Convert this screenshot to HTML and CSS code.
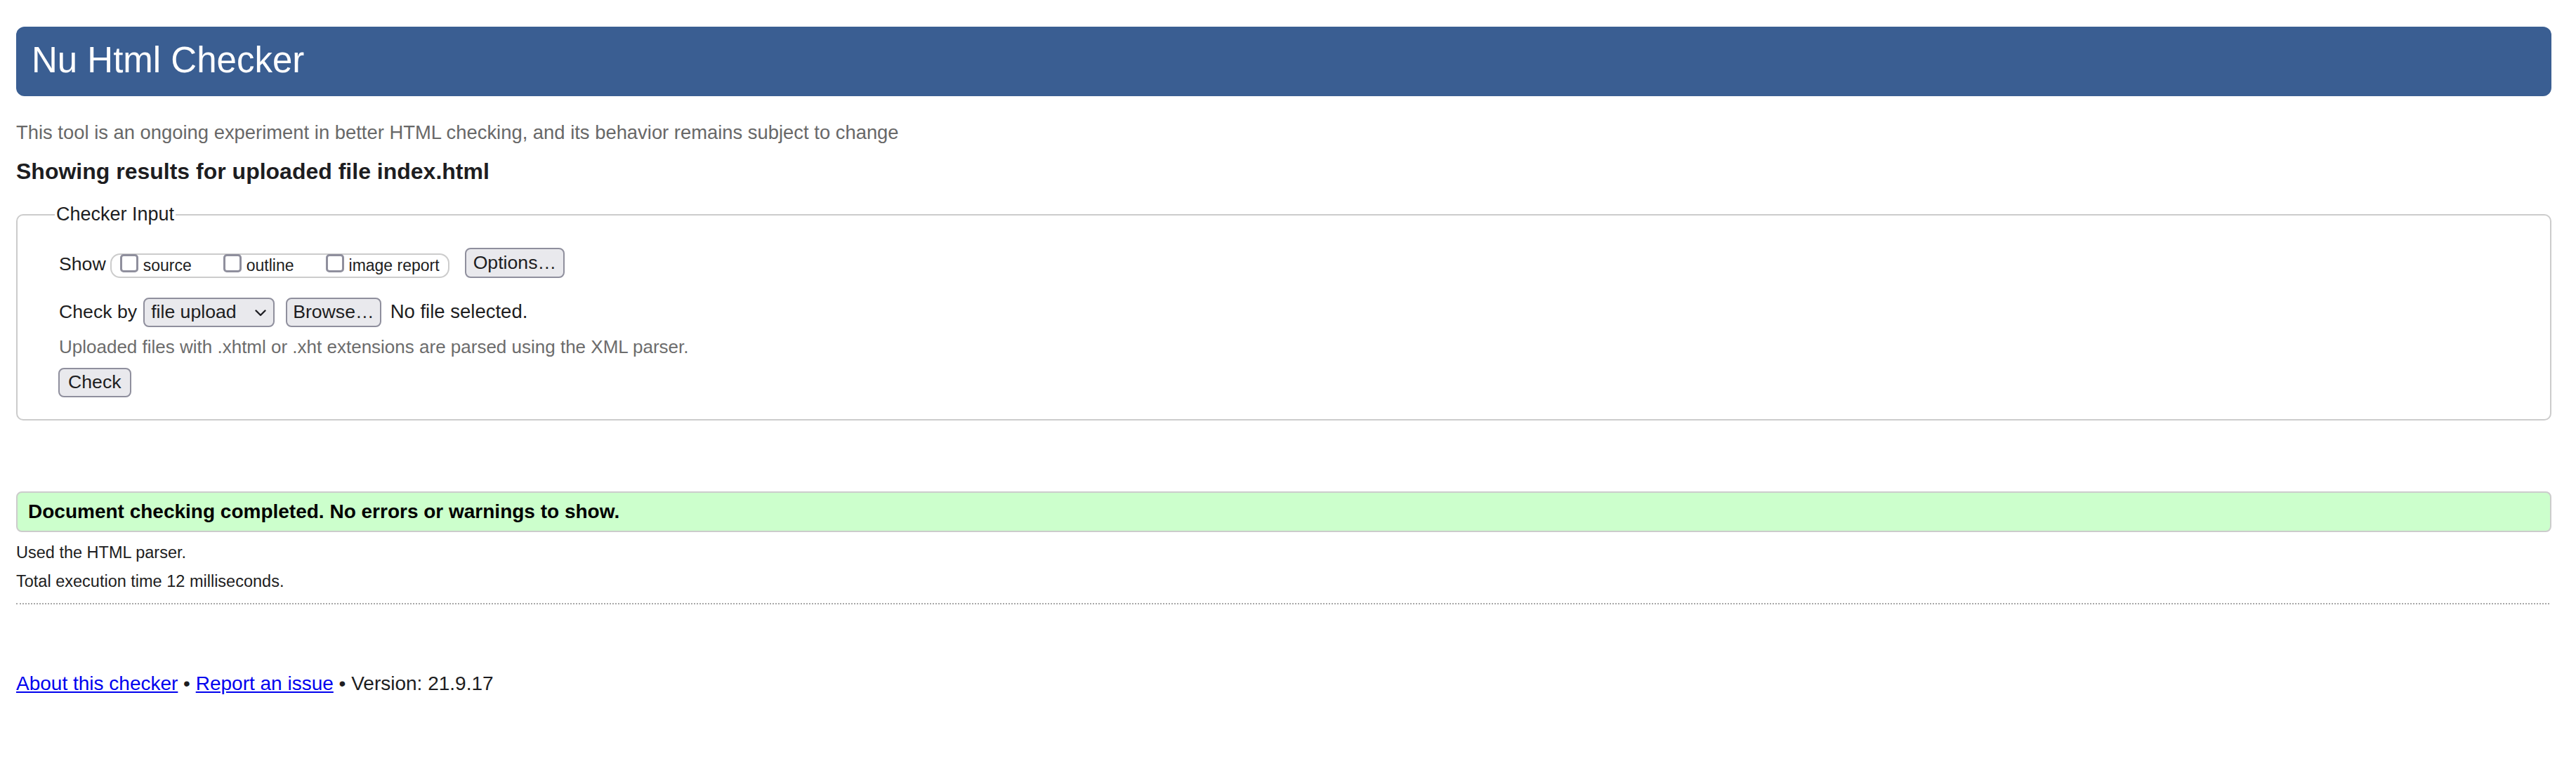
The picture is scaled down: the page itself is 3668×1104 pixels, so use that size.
FILE: index.html
```html
<!DOCTYPE html>
<html lang="en">
<head>
<meta charset="utf-8">
<title>Nu Html Checker</title>
<link rel="stylesheet" href="styles.css">
</head>
<body>
<h1 class="title">Nu Html Checker</h1>
<p class="tagline">This tool is an ongoing experiment in better HTML checking, and its behavior remains subject to change</p>
<h2 class="results-title">Showing results for uploaded file index.html</h2>
<form class="checker">
  <fieldset class="checker-input">
    <legend class="legend">Checker Input</legend>
    <div class="row show-row">
      <span class="label show-label">Show</span>
      <span class="options-group">
        <label class="opt"><input type="checkbox" class="cb"><span class="opt-text">source</span></label>
        <label class="opt"><input type="checkbox" class="cb"><span class="opt-text">outline</span></label>
        <label class="opt"><input type="checkbox" class="cb"><span class="opt-text">image report</span></label>
      </span>
      <button type="button" class="btn options-btn">Options…</button>
    </div>
    <div class="row checkby-row">
      <span class="label">Check by</span>
      <span class="select-wrap">
        <select class="select"><option>file upload</option></select>
        <svg class="chevron" width="16" height="10" viewBox="0 0 16 10" aria-hidden="true"><path d="M1.5 1.5 L8 8 L14.5 1.5" fill="none" stroke="#1f1f24" stroke-width="2.4" stroke-linecap="round" stroke-linejoin="round"/></svg>
      </span>
      <button type="button" class="btn browse-btn">Browse…</button>
      <span class="nofile">No file selected.</span>
    </div>
    <p class="note">Uploaded files with .xhtml or .xht extensions are parsed using the XML parser.</p>
    <button type="button" class="btn check-btn">Check</button>
  </fieldset>
</form>
<p class="success">Document checking completed. No errors or warnings to show.</p>
<p class="meta meta-first">Used the HTML parser.</p>
<p class="meta">Total execution time 12 milliseconds.</p>
<hr class="sep">
<p class="footer"><a class="link" href="#">About this checker</a> • <a class="link" href="#">Report an issue</a> • Version: 21.9.17</p>
</body>
</html>
```

FILE: styles.css
```css
html {
  background: #ffffff;
}

body {
  margin: 0;
  padding: 38px 35px 0 23px;
  font-family: "Liberation Sans", Arial, Helvetica, sans-serif;
  color: #222222;
  font-size: 28px;
}

.title {
  margin: 0;
  height: 99px;
  box-sizing: border-box;
  padding: 19px 22px 23px;
  background: #3a5e92;
  color: #ffffff;
  border-radius: 12px;
  font-size: 51px;
  line-height: 57px;
  font-weight: normal;
}

.tagline {
  margin: 36px 0 0;
  font-size: 27.4px;
  line-height: 32px;
  color: #686868;
}

.results-title {
  margin: 21px 0 0;
  font-size: 32px;
  line-height: 36px;
  font-weight: bold;
  color: #1d1d21;
}

.checker {
  margin: 0;
}

.checker-input {
  margin: 28px 0 0;
  padding: 32px 20px 31px 59px;
  border: 2px solid #cccccc;
  border-radius: 10px;
  min-inline-size: 0;
}

.legend {
  padding: 0 2px;
  margin-left: -6px;
  font-size: 27px;
  line-height: 31px;
  color: #1d1d21;
}

.row {
  display: flex;
}

.show-row {
  align-items: flex-end;
  height: 43px;
}

.label {
  font-size: 26.67px;
  line-height: 31px;
  color: #1d1d21;
}

.show-label {
  padding-bottom: 4px;
  margin-right: 6px;
}

.options-group {
  display: flex;
  align-items: center;
  gap: 45px;
  height: 35px;
  box-sizing: border-box;
  border: 2px solid #cccccc;
  border-radius: 14px;
  padding: 0 12px;
}

.opt {
  display: flex;
  align-items: center;
}

.cb {
  -webkit-appearance: none;
  appearance: none;
  width: 26px;
  height: 26px;
  box-sizing: border-box;
  margin: -7px 7px 0 0;
  border: 3px solid #8f8f9d;
  border-radius: 5px;
  background: #ffffff;
}

.opt-text {
  font-size: 23px;
  line-height: 27px;
  color: #1d1d21;
}

.btn {
  font-family: "Liberation Sans", Arial, Helvetica, sans-serif;
  font-size: 26.67px;
  line-height: 31px;
  color: #1d1d21;
  background: #e9e9ed;
  border: 2px solid #8f8f9d;
  border-radius: 8px;
  margin: 0;
}

.options-btn {
  margin-left: 22px;
  padding: 4px 10px;
  height: 43px;
}

.checkby-row {
  align-items: baseline;
  margin-top: 28px;
}

.checkby-row .label {
  margin-right: 9px;
}

.select-wrap {
  position: relative;
  display: inline-block;
}

.select {
  -webkit-appearance: none;
  appearance: none;
  width: 187px;
  height: 42px;
  box-sizing: border-box;
  padding: 3px 30px 4px 9px;
  font-family: "Liberation Sans", Arial, Helvetica, sans-serif;
  font-size: 26.67px;
  line-height: 31px;
  color: #1d1d21;
  background: #e9e9ed;
  border: 2px solid #8f8f9d;
  border-radius: 8px;
  margin: 0;
}

.chevron {
  position: absolute;
  right: 12px;
  top: 17px;
  pointer-events: none;
}

.browse-btn {
  margin-left: 16px;
  padding: 3px 8px 4px;
  height: 42px;
}

.nofile {
  margin-left: 13px;
  font-size: 27.5px;
  line-height: 31px;
  color: #1d1d21;
}

.note {
  margin: 13px 0 0;
  font-size: 26px;
  line-height: 30px;
  color: #6c6c6c;
}

.check-btn {
  display: block;
  margin-top: 15px;
  margin-left: -1px;
  padding: 3px 12px 4px;
  height: 42px;
}

.success {
  margin: 101px 0 0;
  padding: 11px 15px;
  background: #ccffcc;
  border: 2px solid #cccccc;
  border-radius: 8px;
  font-size: 28px;
  line-height: 32px;
  font-weight: bold;
  color: #000000;
}

.meta {
  margin: 14px 0 0;
  font-size: 23.5px;
  line-height: 27px;
  color: #1d1d21;
}

.meta-first {
  margin-top: 16px;
}

.sep {
  margin: 17px 3px 0 0;
  border: 0;
  border-top: 2px dotted #a8a8a8;
  height: 0;
}

.footer {
  margin: 97px 0 0;
  font-size: 28px;
  line-height: 32px;
  color: #1d1d21;
}

.link {
  color: #0000ee;
  text-decoration: underline;
}
```
